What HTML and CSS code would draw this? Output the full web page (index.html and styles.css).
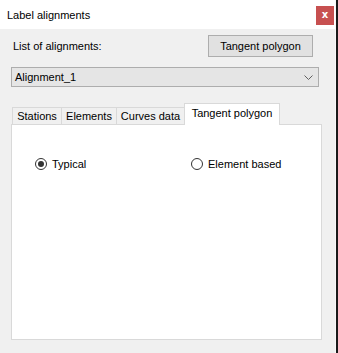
FILE: index.html
```html
<!DOCTYPE html>
<html lang="en">
<head>
  <meta charset="UTF-8" />
  <title>Label alignments</title>
  <link rel="stylesheet" href="styles.css">
</head>
<body>
  <div class="window">
    <div class="titlebar">
      <span class="title">Label alignments</span>
      <button class="close">x</button>
    </div>

    <div class="content">
      <div class="top-row">
        <span class="label">List of alignments:</span>
        <button class="btn">Tangent polygon</button>
      </div>

      <div class="select">
        <span>Alignment_1</span>
        <svg class="chevron" width="9" height="5" viewBox="0 0 9 5">
          <polyline points="0.5,0.5 4.5,4.5 8.5,0.5" fill="none" stroke="#606060" stroke-width="1" />
        </svg>
      </div>

      <div class="tabs">
        <div class="tab tab-stations">Stations</div>
        <div class="tab tab-elements">Elements</div>
        <div class="tab tab-curves">Curves data</div>
        <div class="tab tab-tangent active">Tangent polygon</div>
      </div>

      <div class="panel">
        <div class="radios">
          <label class="radio checked"><span class="dot"></span>Typical</label>
          <label class="radio"><span class="dot"></span>Element based</label>
        </div>
      </div>
    </div>
  </div>
</body>
</html>
```

FILE: styles.css
```css
:root {
  --win-bg:     #f0f0f0;
  --ctl-bg:     #e1e1e1;
  --ctl-border: #adadad;
  --tab-border: #d9d9d9;
  --close-red:  #c75050;
}

html, body {
  margin: 0;
  height: 100%;
}

body {
  background: #1a1a1a;
  font-family: "Liberation Sans", Arial, sans-serif;
  font-size: 11px;
  color: #000;
}

.window {
  width: 335px;
  height: 353px;
  background: var(--win-bg);
  border-right: 1px solid #f8f8f8;
}

.titlebar {
  height: 29px;
  background: #fff;
  display: flex;
  align-items: center;
  padding-left: 7px;
  box-sizing: border-box;
}
.title { font-size: 11px; padding-top: 1px; }

.close {
  margin-left: auto;
  margin-right: 1px;
  margin-top: 2px;
  width: 18px;
  height: 19px;
  border: 0;
  padding: 0 0 2px;
  background: var(--close-red);
  color: #fff;
  font-family: "DejaVu Sans", sans-serif;
  font-weight: bold;
  font-size: 10px;
  line-height: 1;
}

.content { padding: 6px 0 0 11px; }

.top-row {
  display: flex;
  align-items: center;
  height: 22px;
}
.label { padding-left: 2px; }

.btn {
  margin-left: auto;
  margin-right: 22px;
  width: 105px;
  height: 22px;
  border: 1px solid var(--ctl-border);
  background: var(--ctl-bg);
  font: inherit;
  color: #000;
  padding: 0;
}

.select {
  margin-top: 10px;
  width: 308px;
  height: 20px;
  box-sizing: border-box;
  border: 1px solid var(--ctl-border);
  background: #e5e5e5;
  display: flex;
  align-items: center;
  padding: 0 5px 0 3px;
}
.chevron { margin-left: auto; }

.tabs {
  display: flex;
  align-items: flex-end;
  margin-top: 16px;
  padding-left: 1px;
  height: 21px;
}
.tab {
  height: 17px;
  box-sizing: border-box;
  border: 1px solid var(--tab-border);
  border-bottom: 0;
  border-right: 0;
  background: var(--win-bg);
  text-align: center;
  line-height: 17px;
}
.tab-stations { width: 49px; }
.tab-elements { width: 55px; }
.tab-curves   { width: 68px; }
.tab-tangent  { width: 96px; }
.tab.active {
  height: 22px;
  background: #fff;
  border-right: 1px solid var(--tab-border);
  line-height: 18px;
  position: relative;
  margin-bottom: -1px;
}

.panel {
  width: 311px;
  height: 216px;
  box-sizing: border-box;
  background: #fff;
  border: 1px solid var(--tab-border);
}

.radios {
  display: grid;
  grid-template-columns: 156px auto;
  padding: 33px 0 0 23px;
}
.radio {
  display: flex;
  align-items: center;
  gap: 5px;
}
.dot {
  width: 12px;
  height: 12px;
  box-sizing: border-box;
  border: 1px solid #333;
  border-radius: 50%;
  background: #fff;
  display: flex;
  align-items: center;
  justify-content: center;
}
.radio.checked .dot::after {
  content: "";
  width: 6px;
  height: 6px;
  border-radius: 50%;
  background: #333;
}
```
